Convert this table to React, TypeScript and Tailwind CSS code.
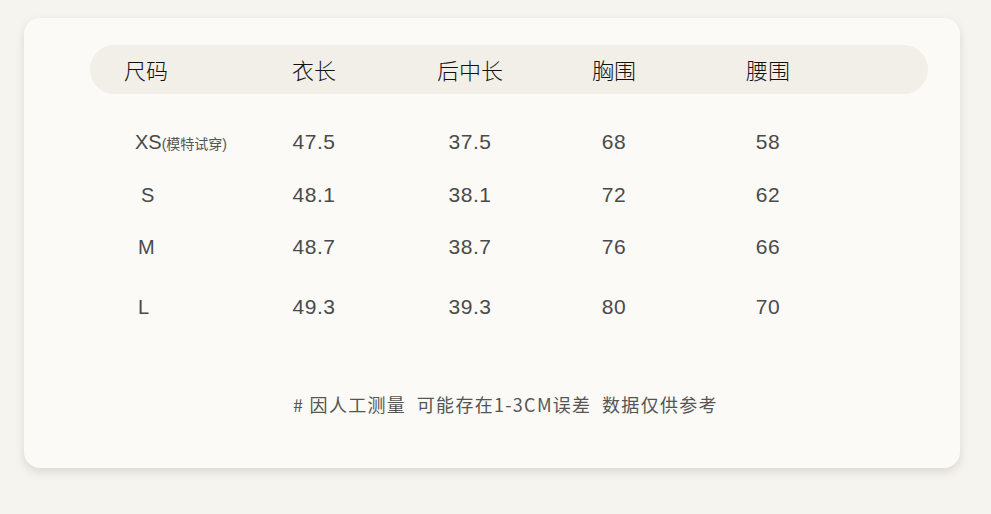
const rows = [
  { size: "XS", note: "(模特试穿)", pad: "pl-[45px]", vals: ["47.5", "37.5", "68", "58"], h: "h-[52px]" },
  { size: "S", note: "", pad: "pl-[51px]", vals: ["48.1", "38.1", "72", "62"], h: "h-[53px]" },
  { size: "M", note: "", pad: "pl-[48px]", vals: ["48.7", "38.7", "76", "66"], h: "h-[52px]" },
  { size: "L", note: "", pad: "pl-[48px]", vals: ["49.3", "39.3", "80", "70"], h: "h-[52px] mt-[8px]" },
];

const cols = ["ml-[56px]", "ml-[44px]", "ml-[32px]", "ml-[42px]"];

export default function App() {
  return (
    <div
      className="w-[991px] h-[514px] bg-[#f5f4ef] pt-[18px] pl-[24px]"
      style={{ fontFamily: '"Noto Sans CJK SC", "Liberation Sans", sans-serif' }}
    >
      <div className="w-[936px] h-[450px] bg-[#fbfaf6] rounded-[16px] shadow-[0_4px_10px_rgba(120,110,90,0.2)] pt-[27px] pl-[66px]">
        <div className="w-[838px] h-[49px] rounded-full bg-[#f1efe7] flex items-center text-[22px] text-[#111] font-light">
          <div className="w-[112px] pl-[34px]">尺码</div>
          {["衣长", "后中长", "胸围", "腰围"].map((t, i) => (
            <div key={t} className={`w-[112px] text-center ${cols[i]}`}>
              {t}
            </div>
          ))}
        </div>

        <div
          className="mt-[22px] text-[21px] text-[#4a4a4a] tracking-[0.5px]"
          style={{ fontFamily: '"Liberation Sans", "Noto Sans CJK SC", sans-serif' }}
        >
          {rows.map((r) => (
            <div key={r.size} className={`flex items-center ${r.h}`}>
              <div className={`w-[112px] whitespace-nowrap text-[20px] tracking-normal ${r.pad}`}>
                {r.size}
                {r.note && <span className="text-[14px] text-[#555]">{r.note}</span>}
              </div>
              {r.vals.map((v, i) => (
                <div key={i} className={`w-[112px] text-center ${cols[i]}`}>
                  {v}
                </div>
              ))}
            </div>
          ))}
        </div>

        <div className="mt-[58px] pl-[203px] text-[18px] text-[#555] tracking-[1.3px] whitespace-pre">
          {"# 因人工测量  可能存在1-3CM误差  数据仅供参考"}
        </div>
      </div>
    </div>
  );
}
